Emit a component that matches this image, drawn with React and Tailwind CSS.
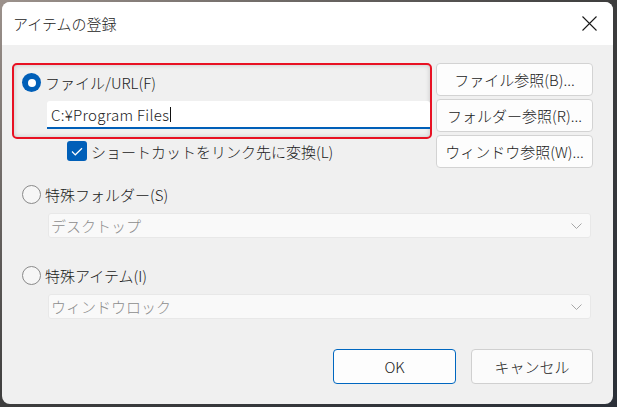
const font = { fontFamily: '"Noto Sans CJK JP", "Noto Sans", sans-serif' };

const Radio = ({ checked }) =>
  checked ? (
    <span className="flex h-[19px] w-[19px] shrink-0 items-center justify-center rounded-full bg-[#005fb8]">
      <span className="h-[8px] w-[8px] rounded-full bg-white" />
    </span>
  ) : (
    <span className="h-[19px] w-[19px] shrink-0 rounded-full border border-[#8a8a8a] bg-[#f6f6f6]" />
  );

const Chevron = () => (
  <svg width="11" height="6" viewBox="0 0 11 6" fill="none" stroke="#a6a6a6" strokeWidth="1">
    <path d="M0.5 0.5 L5.5 5.5 L10.5 0.5" />
  </svg>
);

const SideButton = ({ children }) => (
  <button className="flex h-[33px] w-[157px] items-center justify-center rounded-[4px] border border-[#d3d3d3] bg-[#fdfdfd] text-[15px] text-[#1b1b1b] leading-none">
    {children}
  </button>
);

const Select = ({ value }) => (
  <div className="ml-[36px] mt-[9px] flex h-[25px] w-[543px] items-center justify-between rounded-[3px] border border-[#e8e8e8] bg-[#f9f9f9] pl-[2px] pr-[8px]">
    <span className="text-[15px] leading-none text-[#8c8c8c]">{value}</span>
    <Chevron />
  </div>
);

export default function App() {
  return (
    <div
      className="h-[407px] w-[617px] bg-gradient-to-br from-[#9c928c] via-[#3d3d3d] to-[#2b3038] pb-[3px] pl-[2px] pr-[4px] pt-[2px] font-light"
      style={font}
    >
      <div className="flex h-full w-full flex-col overflow-hidden rounded-[8px] bg-[#f0f0f0]">
        <div className="flex h-[43px] shrink-0 items-center justify-between bg-white pl-[11px] pr-[16px]">
          <span className="text-[15px] leading-none text-[#1a1a1a]">アイテムの登録</span>
          <svg width="15" height="15" viewBox="0 0 15 15" stroke="#1a1a1a" strokeWidth="1.1">
            <path d="M0.5 0.5 L14.5 14.5 M14.5 0.5 L0.5 14.5" />
          </svg>
        </div>

        <div className="flex flex-1 flex-col pl-[10px] pr-[20px] pt-[18px] text-[15px] leading-none text-[#1a1a1a]">
          <div className="flex gap-[4px]">
            <div className="flex w-[421px] flex-col">
              <div className="flex h-[76px] flex-col rounded-[5px] border-2 border-[#e81123] pl-[8px] pt-[8px] shadow-[inset_0_0_5px_rgba(0,0,0,0.18)]">
                <label className="flex h-[19px] items-center gap-[4px]">
                  <Radio checked />
                  <span>ファイル/URL(F)</span>
                </label>
                <div className="ml-[25px] mt-[9px] flex h-[28px] items-center rounded-t-[3px] border-b-2 border-[#005fb8] bg-white pl-[4px]">
                  <span className="border-r border-[#111] pr-[1px] tracking-[0.3px]">C:¥Program Files</span>
                </div>
              </div>
              <label className="ml-[55px] mt-[2px] flex h-[20px] items-center gap-[4px]">
                <span className="flex h-[20px] w-[20px] items-center justify-center rounded-[3px] bg-[#005fb8]">
                  <svg width="12" height="9" viewBox="0 0 12 9" fill="none" stroke="white" strokeWidth="1.2">
                    <path d="M1 4.5 L4.3 7.8 L11 1.2" />
                  </svg>
                </span>
                <span>ショートカットをリンク先に変換(L)</span>
              </label>
            </div>
            <div className="flex flex-col gap-[3px]">
              <SideButton>ファイル参照(B)...</SideButton>
              <SideButton>フォルダー参照(R)...</SideButton>
              <SideButton>ウィンドウ参照(W)...</SideButton>
            </div>
          </div>

          <label className="ml-[10px] mt-[16px] flex h-[20px] items-center gap-[4px]">
            <Radio />
            <span>特殊フォルダー(S)</span>
          </label>
          <Select value="デスクトップ" />

          <label className="ml-[10px] mt-[27px] flex h-[20px] items-center gap-[4px]">
            <Radio />
            <span>特殊アイテム(I)</span>
          </label>
          <Select value="ウィンドウロック" />

          <div className="mt-[30px] flex justify-end gap-[15px]">
            <button className="h-[35px] w-[123px] rounded-[4px] border border-[#0067c0] bg-[#fdfdfd] text-[15px] leading-none">
              OK
            </button>
            <button className="h-[35px] w-[122px] rounded-[4px] border border-[#d0d0d0] bg-[#fbfbfb] text-[15px] leading-none">
              キャンセル
            </button>
          </div>
        </div>
      </div>
    </div>
  );
}
